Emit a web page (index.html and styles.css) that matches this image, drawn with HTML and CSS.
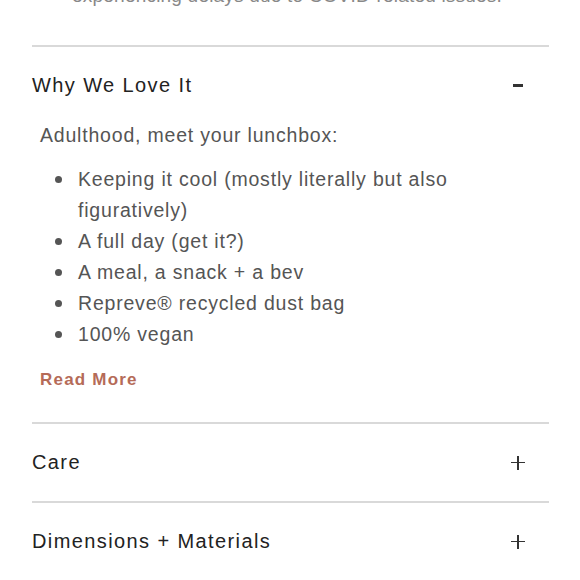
FILE: index.html
```html
<!DOCTYPE html>
<html>
<head>
<meta charset="utf-8">
<link rel="stylesheet" href="styles.css">
</head>
<body>
<div class="page">
  <div class="prev">
    <p class="prev-text">experiencing delays due to COVID-related issues.</p>
  </div>
  <section class="acc open">
    <div class="acc-head">
      <span class="acc-title">Why We Love It</span>
      <span class="minus"></span>
    </div>
    <div class="acc-body">
      <p class="intro">Adulthood, meet your lunchbox:</p>
      <ul class="list">
        <li>Keeping it cool (mostly literally but also figuratively)</li>
        <li>A full day (get it?)</li>
        <li>A meal, a snack + a bev</li>
        <li>Repreve® recycled dust bag</li>
        <li>100% vegan</li>
      </ul>
      <a class="more">Read More</a>
    </div>
  </section>
  <section class="acc">
    <div class="acc-head">
      <span class="acc-title">Care</span>
      <span class="plus"></span>
    </div>
  </section>
  <section class="acc">
    <div class="acc-head">
      <span class="acc-title">Dimensions + Materials</span>
      <span class="plus"></span>
    </div>
  </section>
</div>
</body>
</html>
```
FILE: styles.css
```css
html, body {
  margin: 0;
  padding: 0;
  background: #fff;
}
body {
  font-family: "Liberation Sans", Arial, sans-serif;
  overflow: hidden;
  height: 580px;
}
.page {
  width: 517px;
  margin-left: 32px;
}
.prev {
  display: flow-root;
  height: 47px;
  border-bottom: 2px solid #d9d9d9;
  box-sizing: border-box;
}
.prev-text {
  margin: -14px 0 0 40px;
  font-size: 19px;
  line-height: 20px;
  color: #888;
  letter-spacing: 0.2px;
}
.acc {
  border-bottom: 2px solid #d9d9d9;
}
.acc-head {
  display: flex;
  align-items: center;
  justify-content: space-between;
  height: 77px;
}
.acc-title {
  font-size: 20px;
  letter-spacing: 1.4px;
  color: #222;
}
.minus {
  width: 10px;
  height: 3px;
  background: #333;
  margin-right: 26px;
}
.plus {
  position: relative;
  width: 14px;
  height: 14px;
  margin-right: 24px;
}
.plus::before, .plus::after {
  content: "";
  position: absolute;
  background: #333;
}
.plus::before {
  left: 0;
  top: 6px;
  width: 14px;
  height: 1.6px;
}
.plus::after {
  top: 0;
  left: 6px;
  width: 1.6px;
  height: 14px;
}
.acc-body {
  padding: 0 0 32px 8px;
}
.intro {
  margin: 0;
  font-size: 19.5px;
  line-height: 22px;
  color: #555;
  letter-spacing: 0.8px;
}
.list {
  list-style: none;
  margin: 18px 0 0;
  padding-left: 15px;
  font-size: 19.5px;
  line-height: 31px;
  color: #555;
  letter-spacing: 0.8px;
  width: 400px;
}
.list li {
  display: flex;
  align-items: flex-start;
}
.list li::before {
  content: "";
  flex: none;
  width: 7px;
  height: 7px;
  border-radius: 50%;
  background: #555;
  margin: 12px 16px 0 0;
}
.more {
  display: block;
  margin-top: 20px;
  font-size: 17px;
  line-height: 20px;
  font-weight: bold;
  letter-spacing: 1.2px;
  color: #b56b58;
}
```
